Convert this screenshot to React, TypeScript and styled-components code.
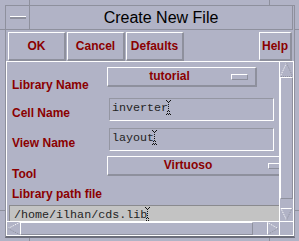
import React from "react";
import styled, { createGlobalStyle, css } from "styled-components";

const BG = "#b1b3c6";
const SHADOW = "#8e909d";
const LIGHT = "#ffffff";
const DARK = "#6b6d7a";
const RED = "#8b0000";

const Global = createGlobalStyle`
  html, body { margin: 0; padding: 0; background: ${BG}; }
  body { font-family: "Liberation Sans", Arial, sans-serif; }
`;

const Frame = styled.div`
  position: relative;
  width: 299px;
  height: 241px;
  box-sizing: border-box;
  padding: 5px 4px 3px 5px;
  background: ${BG};
  overflow: hidden;
`;

type Side = "top" | "bottom" | "left" | "right";

const Tick = styled.span<{ $side: Side; $at: number }>`
  position: absolute;
  background: ${SHADOW};
  ${(p) => p.$side === "top" && css`top: 0; left: ${p.$at}px; width: 1px; height: 5px;`}
  ${(p) => p.$side === "bottom" && css`bottom: 0; left: ${p.$at}px; width: 1px; height: 3px;`}
  ${(p) => p.$side === "left" && css`left: 0; top: ${p.$at}px; width: 5px; height: 1px;`}
  ${(p) => p.$side === "right" && css`right: 0; top: ${p.$at}px; width: 4px; height: 1px;`}
`;

const Window = styled.div`
  height: 100%;
  box-sizing: border-box;
  border-top: 1px solid ${SHADOW};
  border-left: 1px solid ${SHADOW};
  border-right: 1px solid ${SHADOW};
  border-bottom: 2px solid ${DARK};
  display: flex;
  flex-direction: column;
`;

const TitleRow = styled.div`
  display: flex;
  height: 24px;
  flex-shrink: 0;
`;

const MinBox = styled.div`
  width: 24px;
  box-sizing: border-box;
  border-right: 1px solid ${SHADOW};
  border-bottom: 1px solid ${SHADOW};
  display: flex;
  align-items: center;
  justify-content: center;
`;

const MinDash = styled.span`
  width: 16px;
  height: 3px;
  box-sizing: border-box;
  border-top: 1px solid ${LIGHT};
  border-bottom: 2px solid ${SHADOW};
`;

const Title = styled.div`
  flex: 1;
  margin-right: 1px;
  border-right: 1px solid ${SHADOW};
  border-bottom: 1px solid ${SHADOW};
  font-size: 16px;
  line-height: 23px;
  color: #000;
  text-align: center;
  white-space: nowrap;
`;

const ButtonRow = styled.div`
  display: flex;
  gap: 1px;
  padding: 2px 2px 0 2px;
  flex-shrink: 0;
`;

const Button = styled.button<{ $w: number; $push?: boolean }>`
  width: ${(p) => p.$w}px;
  height: 29px;
  box-sizing: border-box;
  margin: 0;
  margin-left: ${(p) => (p.$push ? "auto" : "0")};
  padding: 0;
  background: ${BG};
  border-top: 1px solid ${LIGHT};
  border-left: 1px solid ${LIGHT};
  border-bottom: 2px solid ${SHADOW};
  border-right: 2px solid ${SHADOW};
  font-family: "Liberation Sans", Arial, sans-serif;
  font-weight: bold;
  font-size: 12px;
  color: ${RED};
  display: flex;
  align-items: center;
  justify-content: center;
`;

const FormPanel = styled.div`
  flex: 1;
  min-height: 0;
  border: 1px solid ${LIGHT};
  display: grid;
  grid-template-columns: 1fr 14px;
  grid-template-rows: 1fr 14px;
`;

const Viewport = styled.div`
  overflow: hidden;
  min-width: 0;
  min-height: 0;
`;

const Form = styled.div`
  display: flex;
  flex-direction: column;
  padding: 1px 0 0 2px;
`;

const Row = styled.div<{ $h: number }>`
  display: flex;
  align-items: flex-start;
  height: ${(p) => p.$h}px;
  flex-shrink: 0;
`;

const Label = styled.div<{ $top: number }>`
  width: 98px;
  flex-shrink: 0;
  box-sizing: border-box;
  padding-left: 3px;
  margin-top: ${(p) => p.$top}px;
  font-weight: bold;
  font-size: 12px;
  line-height: 14px;
  color: ${RED};
  white-space: nowrap;
`;

const Dropdown = styled.div<{ $top: number; $w: number }>`
  margin-top: ${(p) => p.$top}px;
  width: ${(p) => p.$w}px;
  height: 20px;
  flex-shrink: 0;
  box-sizing: border-box;
  border-top: 1px solid ${LIGHT};
  border-left: 1px solid ${LIGHT};
  border-bottom: 2px solid ${SHADOW};
  border-right: 2px solid ${SHADOW};
  display: flex;
  align-items: center;
`;

const DropText = styled.span`
  flex: 1;
  text-align: center;
  font-weight: bold;
  font-size: 12px;
  line-height: 17px;
  color: ${RED};
`;

const Indicator = styled.span`
  width: 17px;
  height: 6px;
  flex-shrink: 0;
  box-sizing: border-box;
  margin-right: 7px;
  border-top: 1px solid ${LIGHT};
  border-left: 1px solid ${LIGHT};
  border-bottom: 1px solid ${SHADOW};
  border-right: 1px solid ${SHADOW};
`;

const TextField = styled.div<{ $top: number; $w: number; $left: number; $fill?: boolean }>`
  margin-top: ${(p) => p.$top}px;
  margin-left: ${(p) => p.$left}px;
  width: ${(p) => p.$w}px;
  height: 23px;
  flex-shrink: 0;
  box-sizing: border-box;
  border-top: 1px solid ${(p) => (p.$fill ? "#8a8a8e" : "#9496a2")};
  border-left: 1px solid ${(p) => (p.$fill ? "#8a8a8e" : "#9496a2")};
  border-bottom: 1px solid ${LIGHT};
  border-right: 1px solid ${LIGHT};
  background: ${(p) => (p.$fill ? "#c3c3c3" : "transparent")};
  padding: 2px 0 0 ${(p) => (p.$fill ? 4 : 2)}px;
  display: flex;
  align-items: flex-start;
  font-family: "Liberation Mono", "Courier New", monospace;
  font-size: 11.7px;
  line-height: 14px;
  color: #242424;
  white-space: nowrap;
`;

const CaretSvg = styled.svg`
  flex-shrink: 0;
  margin-left: -2px;
  margin-top: -1px;
`;

const caretDots: [number, number][] = [
  [0, 0], [4, 0], [1, 1], [3, 1], [2, 2], [2, 4], [2, 6], [2, 8], [2, 10],
  [1, 11], [3, 11], [1, 13], [3, 13], [0, 14], [2, 14], [4, 14],
];

const Caret = () => (
  <CaretSvg width="5" height="15" viewBox="0 0 5 15" shapeRendering="crispEdges">
    {caretDots.map(([x, y], i) => (
      <rect key={i} x={x} y={y} width="1" height="1" fill="#111" />
    ))}
  </CaretSvg>
);

const VScroll = styled.div`
  border-left: 1px solid ${LIGHT};
  display: flex;
  flex-direction: column;
  min-height: 0;
`;

const HScroll = styled.div`
  border-top: 1px solid ${LIGHT};
  display: flex;
  min-width: 0;
`;

const Corner = styled.div`
  border-left: 1px solid ${LIGHT};
  border-top: 1px solid ${LIGHT};
`;

const ArrowBox = styled.svg`
  display: block;
  flex-shrink: 0;
`;

const Slider = styled.div<{ $len: number; $vertical?: boolean }>`
  box-sizing: border-box;
  flex-shrink: 0;
  ${(p) => (p.$vertical ? css`height: ${p.$len}px;` : css`width: ${p.$len}px;`)}
  border-top: 1px solid ${LIGHT};
  border-left: 1px solid ${LIGHT};
  border-bottom: 1px solid ${SHADOW};
  border-right: 1px solid ${SHADOW};
`;

const Trough = styled.div`
  flex: 1;
`;

type Dir = "up" | "down" | "left" | "right";

const Arrow = ({ dir }: { dir: Dir }) => {
  const dot = { strokeDasharray: "1 1", strokeWidth: 1, fill: "none" } as const;
  if (dir === "up")
    return (
      <ArrowBox width="13" height="15" viewBox="0 0 13 15">
        <line x1="6.5" y1="1" x2="0.5" y2="14" stroke={LIGHT} {...dot} />
        <line x1="6.5" y1="1" x2="12.5" y2="14" stroke={SHADOW} {...dot} />
        <line x1="1" y1="14.5" x2="12" y2="14.5" stroke={SHADOW} {...dot} />
      </ArrowBox>
    );
  if (dir === "down")
    return (
      <ArrowBox width="13" height="14" viewBox="0 0 13 14">
        <line x1="1" y1="1.5" x2="12" y2="1.5" stroke={LIGHT} strokeWidth="1" />
        <line x1="1" y1="1.5" x2="6.5" y2="13" stroke={LIGHT} {...dot} />
        <line x1="12" y1="1.5" x2="6.5" y2="13" stroke={SHADOW} {...dot} />
      </ArrowBox>
    );
  if (dir === "left")
    return (
      <ArrowBox width="13" height="13" viewBox="0 0 13 13">
        <line x1="12.5" y1="0.5" x2="1" y2="6.5" stroke={LIGHT} {...dot} />
        <line x1="1" y1="6.5" x2="12.5" y2="12.5" stroke={SHADOW} {...dot} />
      </ArrowBox>
    );
  return (
    <ArrowBox width="13" height="13" viewBox="0 0 13 13">
      <line x1="1.5" y1="0.5" x2="1.5" y2="12.5" stroke={LIGHT} strokeWidth="1" />
      <line x1="1.5" y1="0.5" x2="12" y2="6.5" stroke={LIGHT} {...dot} />
      <line x1="12" y1="6.5" x2="1.5" y2="12.5" stroke={SHADOW} {...dot} />
    </ArrowBox>
  );
};

const ticks: [Side, number][] = [
  ["top", 29], ["top", 269], ["bottom", 29], ["bottom", 269],
  ["left", 29], ["left", 210], ["right", 29], ["right", 210],
];

export default function App() {
  return (
    <>
      <Global />
      <Frame>
        {ticks.map(([s, a]) => (
          <Tick key={s + a} $side={s} $at={a} />
        ))}
        <Window>
          <TitleRow>
            <MinBox>
              <MinDash />
            </MinBox>
            <Title>Create New File</Title>
          </TitleRow>
          <ButtonRow>
            <Button $w={58}>OK</Button>
            <Button $w={58}>Cancel</Button>
            <Button $w={58}>Defaults</Button>
            <Button $w={33} $push>
              Help
            </Button>
          </ButtonRow>
          <FormPanel>
            <Viewport>
              <Form>
                <Row $h={30}>
                  <Label $top={15}>Library Name</Label>
                  <Dropdown $top={4} $w={150}>
                    <DropText>tutorial</DropText>
                    <Indicator />
                  </Dropdown>
                </Row>
                <Row $h={30}>
                  <Label $top={13}>Cell Name</Label>
                  <TextField $top={5} $w={165} $left={2}>
                    <span>inverter</span>
                    <Caret />
                  </TextField>
                </Row>
                <Row $h={30}>
                  <Label $top={13}>View Name</Label>
                  <TextField $top={5} $w={165} $left={2}>
                    <span>layout</span>
                    <Caret />
                  </TextField>
                </Row>
                <Row $h={28}>
                  <Label $top={14}>Tool</Label>
                  <Dropdown $top={3} $w={187}>
                    <DropText>Virtuoso</DropText>
                    <Indicator />
                  </Dropdown>
                </Row>
                <Row $h={21}>
                  <Label $top={6}>Library path file</Label>
                </Row>
                <Row $h={30}>
                  <TextField $top={3} $w={290} $left={0} $fill>
                    <span>/home/ilhan/cds.lib</span>
                    <Caret />
                  </TextField>
                </Row>
              </Form>
            </Viewport>
            <VScroll>
              <Arrow dir="up" />
              <Slider $vertical $len={122} />
              <Trough />
              <Arrow dir="down" />
            </VScroll>
            <HScroll>
              <Arrow dir="left" />
              <Slider $len={233} />
              <Trough />
              <Arrow dir="right" />
            </HScroll>
            <Corner />
          </FormPanel>
        </Window>
      </Frame>
    </>
  );
}
